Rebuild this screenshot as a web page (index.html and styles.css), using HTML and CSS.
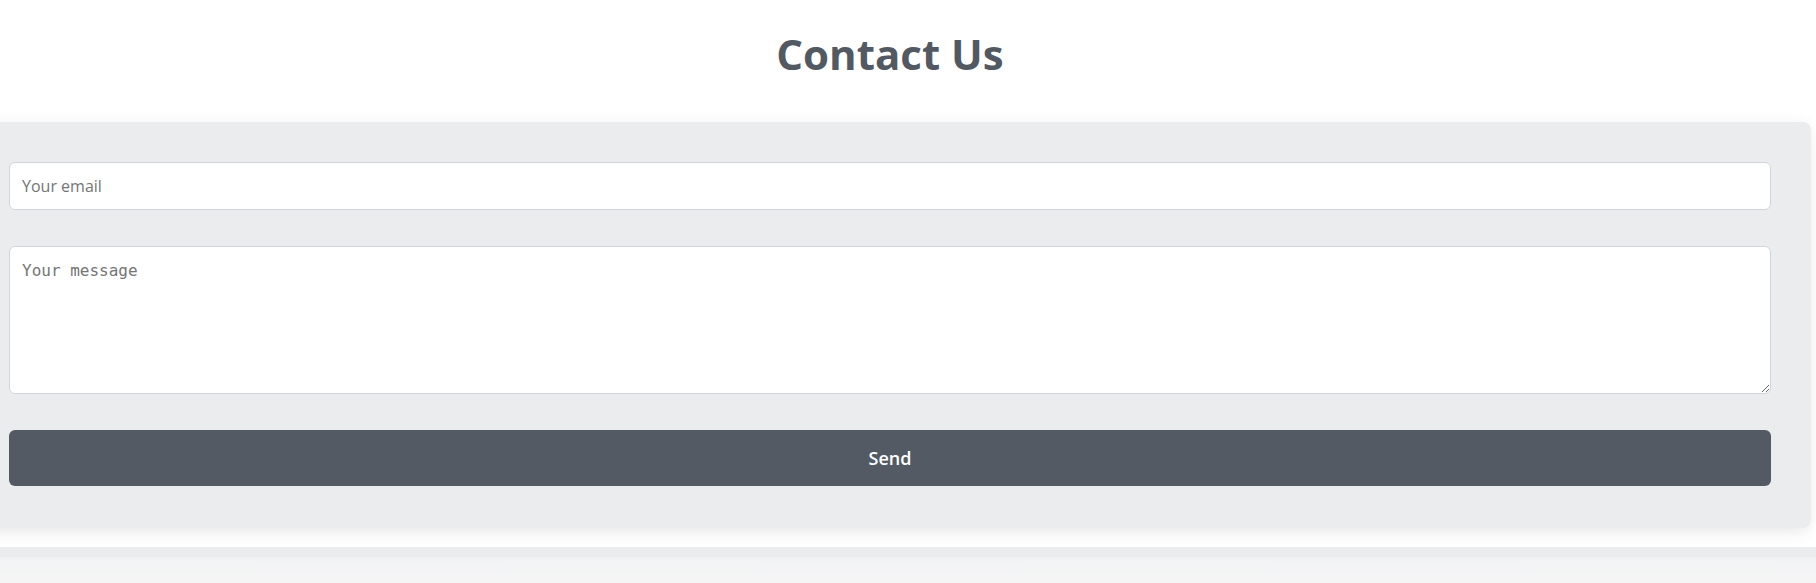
FILE: index.html
```html
<!DOCTYPE html>
<html lang="en">
<head>
<meta charset="utf-8">
<title>Contact Us</title>
<link rel="stylesheet" href="styles.css">
</head>
<body>
<main class="page">
  <h1 class="title">Contact Us</h1>
  <section class="card">
    <form class="form">
      <input class="field" type="email" placeholder="Your email">
      <textarea class="field area" placeholder="Your message"></textarea>
      <button class="send" type="button">Send</button>
    </form>
  </section>
</main>
<footer class="footer"></footer>
</body>
</html>
```
FILE: styles.css
```css
html, body {
  margin: 0;
  padding: 0;
  background: #ffffff;
  overflow: hidden;
}
body {
  font-family: "Open Sans", "Noto Sans", sans-serif;
  height: 583px;
}
.page {
  width: 1842px;
  margin-left: -31px;
}
.title {
  margin: 25px 0 39px;
  font-size: 42px;
  line-height: 58px;
  font-weight: 700;
  text-align: center;
  color: #525962;
}
.card {
  box-sizing: border-box;
  background: #ebecee;
  border-radius: 8px;
  padding: 40px 40px 42px;
  box-shadow: 0 0 14px rgba(0, 0, 0, 0.05), 0 10px 15px -3px rgba(0, 0, 0, 0.05);
}
.form {
  display: flex;
  flex-direction: column;
  gap: 36px;
}
.field {
  box-sizing: border-box;
  display: block;
  width: 100%;
  height: 48px;
  margin: 0;
  padding: 12px 12px;
  border: 1px solid #d1d5db;
  border-radius: 6px;
  background: #ffffff;
  font-family: "Open Sans", "Noto Sans", sans-serif;
  font-size: 16px;
  line-height: 24px;
  color: #374151;
  outline: none;
}
.field::placeholder {
  color: #757575;
}
.area {
  height: 148px;
  font-family: "DejaVu Sans Mono", monospace;
  resize: vertical;
}
.send {
  display: block;
  width: 100%;
  height: 56px;
  border: 0;
  border-radius: 6px;
  background: #535a63;
  color: #ffffff;
  font-family: "Open Sans", "Noto Sans", sans-serif;
  font-size: 18px;
  font-weight: 600;
  cursor: pointer;
}
.footer {
  margin-top: 19px;
  height: 40px;
  background: linear-gradient(#ebecee 0, #ebecee 10px, #f2f3f4 11px, #f6f6f7 40px);
}
```
